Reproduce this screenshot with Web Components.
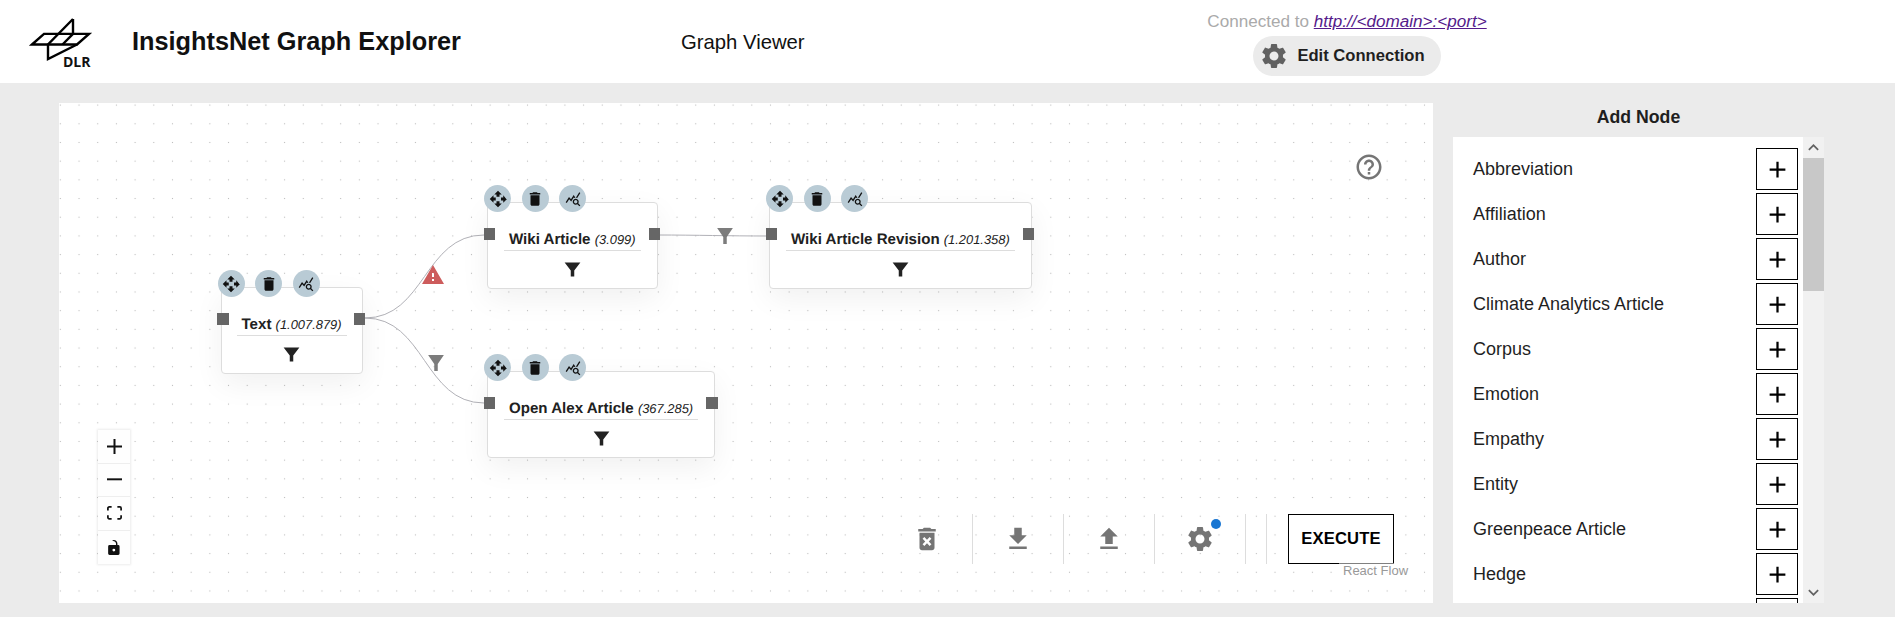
<!DOCTYPE html>
<html lang="en">
	<head>
		<meta charset="utf-8" />
		<title>InsightsNet Graph Explorer</title>
		<style>
			html,
			body {
				margin: 0;
				padding: 0;
				height: 617px;
				overflow: hidden;
				background: #ebebeb;
				color: #1f1f1f;
				font-family: 'Liberation Sans', Arial, sans-serif;
			}
		</style>
	</head>
	<body>
		<app-header></app-header>
		<app-main>
			<flow-canvas slot="canvas">
				<flow-edges></flow-edges>
				<flow-node x="161.5" y="184" pad="15" label="Text" count="1.007.879"></flow-node>
				<flow-node x="428" y="99" label="Wiki Article" count="3.099"></flow-node>
				<flow-node x="710" y="99" label="Wiki Article Revision" count="1.201.358"></flow-node>
				<flow-node x="428" y="268" label="Open Alex Article" count="367.285"></flow-node>
			</flow-canvas>
			<add-node-panel slot="panel">
				<node-row>Abbreviation</node-row>
				<node-row>Affiliation</node-row>
				<node-row>Author</node-row>
				<node-row>Climate Analytics Article</node-row>
				<node-row>Corpus</node-row>
				<node-row>Emotion</node-row>
				<node-row>Empathy</node-row>
				<node-row>Entity</node-row>
				<node-row>Greenpeace Article</node-row>
				<node-row>Hedge</node-row>
				<node-row></node-row>
			</add-node-panel>
		</app-main>

		<script>
			const ICONS = {
				gear: 'M19.14 12.94c.04-.3.06-.61.06-.94 0-.32-.02-.64-.07-.94l2.03-1.58c.18-.14.23-.41.12-.61l-1.92-3.32c-.12-.22-.37-.29-.59-.22l-2.39.96c-.5-.38-1.03-.7-1.62-.94l-.36-2.54c-.04-.24-.24-.41-.48-.41h-3.84c-.24 0-.43.17-.47.41l-.36 2.54c-.59.24-1.13.57-1.62.94l-2.39-.96c-.22-.08-.47 0-.59.22L2.74 8.87c-.12.21-.08.47.12.61l2.03 1.58c-.05.3-.09.63-.09.94s.02.64.07.94l-2.03 1.58c-.18.14-.23.41-.12.61l1.92 3.32c.12.22.37.29.59.22l2.39-.96c.5.38 1.03.7 1.62.94l.36 2.54c.05.24.24.41.48.41h3.84c.24 0 .44-.17.47-.41l.36-2.54c.59-.24 1.13-.56 1.62-.94l2.39.96c.22.08.47 0 .59-.22l1.92-3.32c.12-.22.07-.47-.12-.61l-2.01-1.58zM12 15.6c-1.98 0-3.6-1.62-3.6-3.6s1.62-3.6 3.6-3.6 3.6 1.62 3.6 3.6-1.62 3.6-3.6 3.6z',
				move: 'M10 9h4V6h3l-5-5-5 5h3v3zm-1 1H6V7l-5 5 5 5v-3h3v-4zm14 2l-4-5v3h-3v4h3v3l5-5zm-9 3h-4v3H7l5 5 5-5h-3v-3z',
				trash: 'M6 19c0 1.1.9 2 2 2h8c1.1 0 2-.9 2-2V7H6v12zM19 4h-3.5l-1-1h-5l-1 1H5v2h14V4z',
				trashX: 'M6 19c0 1.1.9 2 2 2h8c1.1 0 2-.9 2-2V7H6v12zm2.46-7.12 1.41-1.41L12 12.59l2.12-2.12 1.41 1.41L13.41 14l2.12 2.12-1.41 1.41L12 15.41l-2.12 2.12-1.41-1.41L10.59 14l-2.13-2.12zM15.5 4l-1-1h-5l-1 1H5v2h14V4z',
				stats: 'M19.88 18.47c.44-.7.7-1.51.7-2.39 0-2.49-2.01-4.5-4.5-4.5s-4.5 2.01-4.5 4.5 2.01 4.5 4.49 4.5c.88 0 1.7-.26 2.39-.7L21.58 23 23 21.58l-3.12-3.11zm-3.8.11c-1.38 0-2.5-1.12-2.5-2.5s1.12-2.5 2.5-2.5 2.5 1.12 2.5 2.5-1.12 2.5-2.5 2.5zm-.36-8.5c-.74.02-1.45.18-2.1.45l-.55-.83-3.8 6.18-3.01-3.52-3.63 5.81L1 17l5-8 3 3.5L13 6l2.72 4.08zm2.59.5c-.64-.28-1.33-.45-2.05-.49L21.38 2 23 3.18l-4.69 7.4z',
				filter: 'M3 4h18l-7 9v7h-4v-7z',
				warning: 'M1 21h22L12 2 1 21zm12-3h-2v-2h2v2zm0-4h-2v-4h2v4z',
				help: 'M11 18h2v-2h-2v2zm1-16C6.48 2 2 6.48 2 12s4.48 10 10 10 10-4.48 10-10S17.52 2 12 2zm0 18c-4.41 0-8-3.59-8-8s3.59-8 8-8 8 3.59 8 8-3.59 8-8 8zm0-14c-2.21 0-4 1.79-4 4h2c0-1.1.9-2 2-2s2 .9 2 2c0 2-3 1.75-3 5h2c0-2.25 3-2.5 3-5 0-2.21-1.79-4-4-4z',
				download: 'M5 20h14v-2H5v2zM19 9h-4V3H9v6H5l7 7 7-7z',
				upload: 'M5 20h14v-2H5v2zm0-10h4v6h6v-6h4l-7-7-7 7z',
				add: 'M19 13h-6v6h-2v-6H5v-2h6V5h2v6h6v2z',
				up: 'M7.41 15.41 12 10.83l4.59 4.58L18 14l-6-6-6 6z',
				down: 'M7.41 8.59 12 13.17l4.59-4.58L18 10l-6 6-6-6z'
			};

			class UiIcon extends HTMLElement {
				connectedCallback() {
					const size = this.getAttribute('size') || 24;
					const color = this.getAttribute('color') || 'currentColor';
					this.attachShadow({ mode: 'open' });
					this.shadowRoot.innerHTML = `
						<style>
							:host { display: inline-flex; line-height: 0; }
						</style>
						<svg width="${size}" height="${size}" viewBox="0 0 24 24" fill="${color}">
							<path d="${ICONS[this.getAttribute('name')]}" />
						</svg>
					`;
				}
			}
			customElements.define('ui-icon', UiIcon);

			class DlrLogo extends HTMLElement {
				constructor() {
					super();
					this.attachShadow({ mode: 'open' });
					this.shadowRoot.innerHTML = `
						<style>
							:host { display: block; position: relative; height: 56px; }
							svg { display: block; }
							span {
								position: absolute;
								left: 36px;
								top: 41px;
								font: bold 14px/14px 'Open Sans', sans-serif;
								color: #111;
							}
						</style>
						<svg width="68" height="50" viewBox="0 0 68 50" fill="none" stroke="#000" stroke-width="2.4">
							<path d="M5 30.5 17 19.9H62L50 30.5z" />
							<path d="M46 5V19.9" />
							<path d="M46 5 21 30.5V45L50 30.5" />
							<path d="M46 19.9 35.5 30.5" />
						</svg>
						<span>DLR</span>
					`;
				}
			}
			customElements.define('dlr-logo', DlrLogo);

			class AppHeader extends HTMLElement {
				constructor() {
					super();
					this.attachShadow({ mode: 'open' });
					this.shadowRoot.innerHTML = `
						<style>
							:host {
								display: flex;
								align-items: center;
								height: 83px;
								background: #fff;
							}
							dlr-logo { align-self: flex-start; margin: 14px 0 0 27px; width: 105px; }
							h1 {
								width: 549px;
								margin: 0;
								font-size: 25.3px;
								font-weight: bold;
								color: #111;
							}
							.view { width: 466px; margin-top: 1px; font-size: 20.3px; color: #111; }
							.connection {
								display: flex;
								flex-direction: column;
								align-items: center;
								align-self: flex-start;
								width: 400px;
							}
							.status { height: 24px; margin-top: 10px; font-size: 17.1px; line-height: 24px; color: #aaa; white-space: nowrap; }
							a { color: #551a8b; font-style: italic; }
							button {
								display: flex;
								align-items: center;
								gap: 8px;
								height: 40px;
								margin-top: 2px;
								padding: 0 16px 0 6px;
								border: 0;
								border-radius: 20px;
								background: #ebebeb;
								color: #1f1f1f;
								font: bold 16.6px 'Liberation Sans', Arial, sans-serif;
							}
						</style>
						<dlr-logo></dlr-logo>
						<h1>InsightsNet Graph Explorer</h1>
						<div class="view">Graph Viewer</div>
						<div class="connection">
							<div class="status">Connected to <a href="#">http://&lt;domain&gt;:&lt;port&gt;</a></div>
							<button><ui-icon name="gear" size="30" color="#616161"></ui-icon>Edit Connection</button>
						</div>
					`;
				}
			}
			customElements.define('app-header', AppHeader);

			class AppMain extends HTMLElement {
				constructor() {
					super();
					this.attachShadow({ mode: 'open' });
					this.shadowRoot.innerHTML = `
						<style>
							:host {
								display: flex;
								gap: 20px;
								height: 500px;
								padding: 20px 0 14px 59px;
							}
						</style>
						<slot name="canvas"></slot>
						<slot name="panel"></slot>
					`;
				}
			}
			customElements.define('app-main', AppMain);

			class FlowCanvas extends HTMLElement {
				constructor() {
					super();
					this.attachShadow({ mode: 'open' });
					this.shadowRoot.innerHTML = `
						<style>
							:host {
								display: block;
								position: relative;
								flex: none;
								width: 1374px;
								height: 500px;
								background-color: #fff;
								background-image: radial-gradient(circle, #bbb 0.65px, transparent 1px);
								background-size: 18.7px 18.7px;
								background-position: -8px -7.25px;
							}
							.help { position: absolute; left: 1295px; top: 49px; }
						</style>
						<slot></slot>
						<ui-icon class="help" name="help" size="30" color="#757575"></ui-icon>
						<flow-controls></flow-controls>
						<flow-toolbar></flow-toolbar>
						<flow-attribution></flow-attribution>
					`;
				}
			}
			customElements.define('flow-canvas', FlowCanvas);

			class FlowEdges extends HTMLElement {
				constructor() {
					super();
					this.attachShadow({ mode: 'open' });
					this.shadowRoot.innerHTML = `
						<style>
							:host { position: absolute; inset: 0; display: block; }
							svg { display: block; }
							.edge { fill: none; stroke: #b1b1b7; stroke-width: 1; }
						</style>
						<svg width="1374" height="500">
							<path class="edge" d="M306 215C366 215 365 132 425 132" />
							<path class="edge" d="M306 215C366 215 365 300 425 300" />
							<path class="edge" d="M597 132C640 132 667 133 710 133" />
							<path d="${ICONS.warning}" fill="#cd5c5c" transform="translate(362 160)" />
							<path d="${ICONS.filter}" fill="#757575" opacity=".95" transform="translate(366.5 248) scale(.875 1)" />
							<path d="${ICONS.filter}" fill="#757575" opacity=".95" transform="translate(655.5 121) scale(.875 1)" />
						</svg>
					`;
				}
			}
			customElements.define('flow-edges', FlowEdges);

			class FlowNode extends HTMLElement {
				connectedCallback() {
					const pad = this.getAttribute('pad') || 16;
					this.style.left = this.getAttribute('x') + 'px';
					this.style.top = this.getAttribute('y') + 'px';
					this.attachShadow({ mode: 'open' });
					this.shadowRoot.innerHTML = `
						<style>
							:host {
								position: absolute;
								display: block;
								box-sizing: border-box;
								height: 86.5px;
								padding: 26px ${pad}px 0;
								background: #fff;
								border: 1px solid #ddd;
								border-radius: 4px;
								box-shadow: 0 10px 30px rgba(0, 0, 0, .06);
								white-space: nowrap;
								text-rendering: geometricPrecision;
							}
							.title {
								height: 21px;
								padding: 0 5px;
								border-bottom: 1px solid #ddd;
								font-size: 15.1px;
								line-height: 21px;
								font-weight: bold;
								color: #212121;
							}
							.title i { font-size: 12.9px; font-weight: normal; }
							.filter { display: flex; justify-content: center; margin-top: 8px; }
							.handle {
								position: absolute;
								top: 25px;
								width: 11.5px;
								height: 11.5px;
								background: #666;
							}
							.in { left: -4.5px; }
							.out { right: -3.5px; }
							.tools {
								position: absolute;
								left: -4px;
								top: -18px;
								display: flex;
								gap: 10.5px;
							}
							.tools span {
								display: flex;
								align-items: center;
								justify-content: center;
								width: 27px;
								height: 27px;
								border-radius: 50%;
								background: #b9cbd5;
							}
						</style>
						<div class="tools">
							<span><ui-icon name="move" size="18" color="#111"></ui-icon></span>
							<span><ui-icon name="trash" size="18" color="#111"></ui-icon></span>
							<span><ui-icon name="stats" size="16" color="#111"></ui-icon></span>
						</div>
						<div class="handle in"></div>
						<div class="handle out"></div>
						<div class="title">${this.getAttribute('label')} <i>(${this.getAttribute('count')})</i></div>
						<div class="filter"><ui-icon name="filter" size="21" color="#222"></ui-icon></div>
					`;
				}
			}
			customElements.define('flow-node', FlowNode);

			class FlowControls extends HTMLElement {
				constructor() {
					super();
					this.attachShadow({ mode: 'open' });
					this.shadowRoot.innerHTML = `
						<style>
							:host {
								position: absolute;
								left: 39px;
								top: 327px;
								display: block;
								width: 32px;
								background: #fefefe;
								box-shadow: 0 0 2px 1px rgba(0, 0, 0, .08);
							}
							div {
								display: flex;
								align-items: center;
								justify-content: center;
								box-sizing: border-box;
								height: 33.5px;
								border-bottom: 1px solid #eee;
							}
							div:last-child { border-bottom: 0; }
							svg { display: block; fill: #111; }
						</style>
						<div><svg width="15" height="15" viewBox="0 0 32 32"><path d="M32 18.133H18.133V32h-4.266V18.133H0v-4.266h13.867V0h4.266v13.867H32z" /></svg></div>
						<div><svg width="15" height="3" viewBox="0 0 32 5"><path d="M0 0h32v4.2H0z" /></svg></div>
						<div><svg width="15" height="14" viewBox="0 0 32 30"><path d="M3.692 4.63c0-.53.4-.938.939-.938h5.215V0H4.708C2.13 0 0 2.054 0 4.63v5.216h3.692V4.631zM27.354 0h-5.2v3.692h5.17c.53 0 .984.4.984.939v5.215H32V4.631A4.624 4.624 0 0027.354 0zm.954 24.83c0 .532-.4.94-.939.94h-5.215v3.768h5.215c2.577 0 4.631-2.13 4.631-4.707v-5.139h-3.692v5.139zm-23.677.94c-.531 0-.939-.4-.939-.94v-5.138H0v5.139c0 2.577 2.13 4.707 4.708 4.707h5.138V25.77H4.631z" /></svg></div>
						<div><svg width="12" height="15" viewBox="0 0 25 32"><path d="M21.333 10.667H19.81V7.619C19.81 3.429 16.38 0 12.19 0c-4.114 0-4.298 1.828-1.37 2.133 2.476.305 5.943 2.59 5.943 5.486v3.048H3.048A3.056 3.056 0 000 13.714v15.238A3.056 3.056 0 003.048 32h18.285a3.056 3.056 0 003.048-3.048V13.714a3.056 3.056 0 00-3.048-3.047zM12.19 24.533a3.056 3.056 0 01-3.047-3.047 3.056 3.056 0 013.047-3.048 3.056 3.056 0 013.048 3.048 3.056 3.056 0 01-3.048 3.047z" /></svg></div>
					`;
				}
			}
			customElements.define('flow-controls', FlowControls);

			class FlowToolbar extends HTMLElement {
				constructor() {
					super();
					this.attachShadow({ mode: 'open' });
					this.shadowRoot.innerHTML = `
						<style>
							:host {
								position: absolute;
								left: 823px;
								top: 411px;
								display: flex;
								height: 50px;
							}
							.cell {
								position: relative;
								display: flex;
								align-items: center;
								justify-content: center;
								box-sizing: border-box;
								width: 91px;
								border-right: 1px solid #ddd;
							}
							.cell.small { width: 21px; }
							.dot {
								position: absolute;
								left: 56px;
								top: 5px;
								width: 10px;
								height: 10px;
								border-radius: 50%;
								background: #1976d2;
							}
							button {
								box-sizing: border-box;
								width: 106px;
								height: 50px;
								margin-left: 21px;
								padding: 0;
								border: 1px solid #000;
								background: #fff;
								color: #000;
								font: bold 16.6px 'Liberation Sans', Arial, sans-serif;
								letter-spacing: .15px;
							}
						</style>
						<div class="cell"><ui-icon name="trashX" size="30" color="#757575"></ui-icon></div>
						<div class="cell"><ui-icon name="download" size="30" color="#757575"></ui-icon></div>
						<div class="cell"><ui-icon name="upload" size="30" color="#757575"></ui-icon></div>
						<div class="cell"><ui-icon name="gear" size="30" color="#757575"></ui-icon><span class="dot"></span></div>
						<div class="cell small"></div>
						<button>EXECUTE</button>
					`;
				}
			}
			customElements.define('flow-toolbar', FlowToolbar);

			class FlowAttribution extends HTMLElement {
				constructor() {
					super();
					this.attachShadow({ mode: 'open' });
					this.shadowRoot.innerHTML = `
						<style>
							:host {
								position: absolute;
								left: 1280px;
								top: 460px;
								display: block;
								padding: 0 4px;
								background: rgba(255, 255, 255, .5);
								color: #999;
								font-size: 13px;
								line-height: 15px;
							}
						</style>
						React Flow
					`;
				}
			}
			customElements.define('flow-attribution', FlowAttribution);

			class AddNodePanel extends HTMLElement {
				constructor() {
					super();
					this.attachShadow({ mode: 'open' });
					this.shadowRoot.innerHTML = `
						<style>
							:host {
								display: flex;
								flex-direction: column;
								flex: none;
								width: 371px;
								height: 500px;
							}
							h2 {
								height: 34px;
								margin: 0;
								font-size: 17.7px;
								line-height: 28px;
								font-weight: bold;
								text-align: center;
								color: #1f1f1f;
							}
							.body { display: flex; height: 466px; }
							.list {
								flex: 1;
								box-sizing: border-box;
								padding-top: 11px;
								overflow: hidden;
								background: #fff;
							}
							.bar {
								position: relative;
								flex: none;
								width: 21px;
								background: #f1f1f1;
							}
							.thumb {
								position: absolute;
								left: 0;
								top: 21px;
								width: 21px;
								height: 133px;
								background: #c8c8c8;
							}
							.arrow { position: absolute; left: 0; display: flex; }
							.arrow.up { top: 0; }
							.arrow.down { bottom: 0; }
						</style>
						<h2>Add Node</h2>
						<div class="body">
							<div class="list"><slot></slot></div>
							<div class="bar">
								<span class="arrow up"><ui-icon name="up" size="21" color="#616161"></ui-icon></span>
								<div class="thumb"></div>
								<span class="arrow down"><ui-icon name="down" size="21" color="#616161"></ui-icon></span>
							</div>
						</div>
					`;
				}
			}
			customElements.define('add-node-panel', AddNodePanel);

			class NodeRow extends HTMLElement {
				constructor() {
					super();
					this.attachShadow({ mode: 'open' });
					this.shadowRoot.innerHTML = `
						<style>
							:host {
								display: flex;
								align-items: center;
								height: 42px;
								margin-bottom: 3px;
								padding: 0 5px 0 20px;
								font-size: 18px;
								color: #1f1f1f;
							}
							button {
								display: flex;
								align-items: center;
								justify-content: center;
								box-sizing: border-box;
								width: 42px;
								height: 42px;
								margin-left: auto;
								padding: 0;
								border: 1.5px solid #000;
								background: #fff;
							}
						</style>
						<slot></slot>
						<button><ui-icon name="add" size="27" color="#000"></ui-icon></button>
					`;
				}
			}
			customElements.define('node-row', NodeRow);
		</script>
	</body>
</html>
